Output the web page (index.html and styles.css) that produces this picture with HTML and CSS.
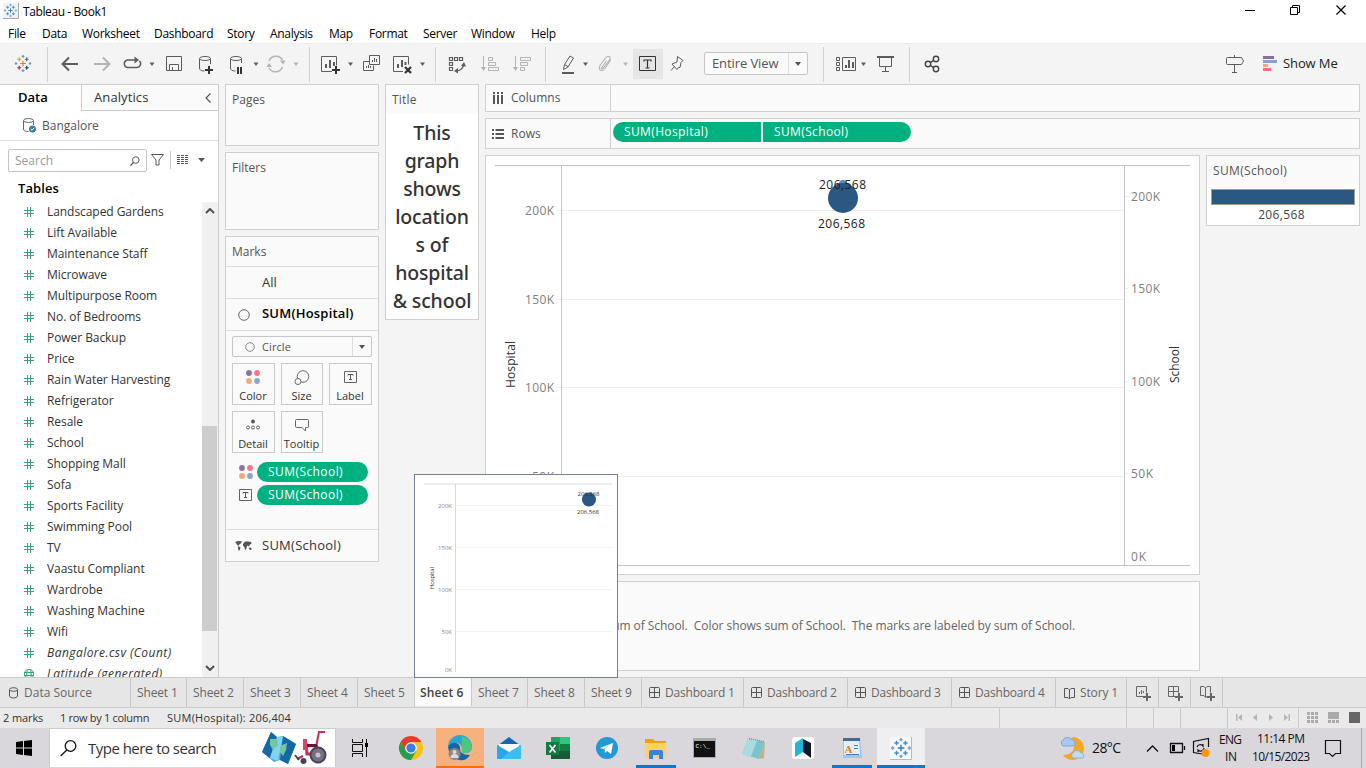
FILE: index.html
```html
<!DOCTYPE html>
<html lang="en">
<head>
<meta charset="utf-8">
<title>Tableau - Book1</title>
<link rel="stylesheet" href="styles.css">
</head>
<body>
<svg class="defs" width="0" height="0">
  <symbol id="hash" viewBox="0 0 10 10"><path d="M3.500 0v10M6.500 0v10M0 3.500h10M0 6.500h10" stroke="#3aa37c" fill="none"/></symbol>
  <symbol id="tlogo" viewBox="0 0 18 18"><g fill="none" stroke-width="1.3"><path class="c1" d="M9 6v6M6 9h6"/><path class="c2" d="M5 2.500v4M3 4.500h4"/><path class="c3" d="M13 2.500v4M11 4.500h4"/><path class="c4" d="M5 11.500v4M3 13.500h4"/><path class="c5" d="M13 11.500v4M11 13.500h4"/><path class="c6" d="M9 0v3M7.500 1.500h3M1.500 7.500v3M0 9h3"/><path class="c7" d="M16.500 7.500v3M15 9h3M9 15v3M7.500 16.500h3"/></g></symbol>
  <symbol id="grid" viewBox="0 0 11 11"><path d="M1.500.5h8q1 0 1 1v8q0 1-1 1h-8q-1 0-1-1v-8q0-1 1-1zM5.500.5v10M.5 5.500h10" fill="none" stroke="#555"/></symbol>
  <symbol id="dots" viewBox="0 0 14 14"><circle cx="3" cy="3" r="2.900" fill="#8a759c"/><circle cx="11" cy="3" r="2.900" fill="#fb7185"/><circle cx="3" cy="11" r="2.900" fill="#f4a77f"/><circle cx="11" cy="11" r="2.900" fill="#86a7cb"/></symbol>
  <symbol id="tbox" viewBox="0 0 13 12"><path d="M.5.500h12v11H.5z" fill="none" stroke="#666"/><path d="M4 4.500V3.500h5v1M6.500 3.500v5M5 8.500h3" fill="none" stroke="#555"/></symbol>
</svg>

<header class="titlebar">
  <svg class="app" width="16" height="16"><path d="M0 0h15v15H0z" fill="#f0f1f3"/><path d="M15.500 0v15.500H0" stroke="#aaa" fill="none"/><use href="#tlogo" x="1" y="1" width="13" height="13"/></svg>
  <span class="name">Tableau - Book1</span>
  <svg class="winctl" width="110" height="22" viewBox="1240 0 110 22"><path d="M1245 10.500h10M1290.500 7.500h7v7h-7zM1292.500 7.500v-2h7v7h-2" fill="none" stroke="#000"/><path d="M1336.500 5.500l9 9m0-9l-9 9" stroke="#000" stroke-width="1.200"/></svg>
</header>
<nav class="menu"><span class="m1">File</span><span class="m2">Data</span><span class="m3">Worksheet</span><span class="m4">Dashboard</span><span class="m5">Story</span><span class="m6">Analysis</span><span class="m7">Map</span><span class="m8">Format</span><span class="m9">Server</span><span class="m10">Window</span><span>Help</span></nav>

<div class="toolbar">
  <svg class="tool color" width="47" height="40" viewBox="0 44 47 40"><use href="#tlogo" x="14.500" y="55" width="17" height="17"/></svg>
  <svg class="tool sep" width="262" height="40" viewBox="47 44 262 40">
    <path d="M63 64h15M69 57.500L62.500 64l6.500 6.500" stroke-width="2"/>
    <path class="dim" d="M94 64h15M103 57.500l6.500 6.500-6.500 6.500" stroke-width="2"/>
    <path d="M131 67.500h-3.500a3.800 3.800 0 010-7.500h8M131 67.500h5.500a3.800 3.800 0 003-6.500" stroke-width="1.500"/><path d="M134.500 56.500l4.500 3.500-4.500 3.500z" class="fill"/>
    <path class="caret" d="M149.500 62.500h5l-2.500 3.500z"/>
    <path d="M166.500 56.500h15v14h-15zM169.500 70.500v-6h9v6M172.500 70v-3"/>
    <path d="M199.500 59v9q0 3 5 3M210.500 59v5"/><ellipse cx="205" cy="58.500" rx="5.500" ry="2"/><path d="M209 66v8M205 70h8" stroke="#333" stroke-width="2"/>
    <path d="M230.500 59v9q0 3 5 3M241.500 59v4"/><ellipse cx="236" cy="58.500" rx="5.500" ry="2"/><path d="M238 67v7M241 67v7" stroke="#333" stroke-width="2"/>
    <path class="caret" d="M253.500 62.500h5l-2.500 3.500z"/>
    <path class="dim" d="M269 61a7.500 7.500 0 0113.500-1M282.500 67a7.500 7.500 0 01-13.500 1" stroke-width="1.500"/><path class="dimfill" d="M280 60.500h5.500l-2.500 4zM266.500 67h5.500l-3-4z"/>
    <path class="dimfill" d="M293.500 62.500h5l-2.500 3.500z"/>
  </svg>
  <svg class="tool sep" width="126" height="40" viewBox="309 44 126 40">
    <path d="M332 71.500h-10.500v-15h15v9"/><path d="M326 64v4M330 60v8M334 62v4" stroke-width="2"/><path d="M336 66v8M332 70h8" stroke="#333" stroke-width="2"/>
    <path class="caret" d="M348 62.500h5l-2.500 3.500z"/>
    <path d="M369.500 55.500h10v9h-10zM369 61.500h-5.500v9h10v-5M372.500 62v-2M374.500 62v-4M376.500 62v-3M366.500 68v-2M368.500 68v-3M370.500 68v-2"/>
    <path d="M403 71.500h-9.500v-15h15v8"/><path d="M398 64v4M402 60v7M405.500 62v3" stroke-width="2"/><path d="M405 67l6 6m0-6l-6 6" stroke="#333" stroke-width="2.200"/>
    <path class="caret" d="M420 62.500h5l-2.500 3.500z"/>
  </svg>
  <svg class="tool sep" width="110" height="40" viewBox="435 44 110 40">
    <path d="M449.500 57.500h3v3h-3zM454.500 57.500h3v3h-3zM459.500 57.500h3v3h-3zM449.500 62.500h3v3h-3zM449.500 67.500h3v3h-3zM463.500 64q0 6-7 7" stroke-width="1.200"/><path class="fill" d="M461 66l3-4 2 4.500zM458 68v5.500l-4-2.500z"/>
    <path class="dim" d="M483.500 56v14M488.500 57.500h4v3h-4zM488.500 62.500h7v3h-7zM488.500 67.500h10v3h-10z"/><path class="dimfill" d="M481 67h5l-2.500 4z"/>
    <path class="dim" d="M515.500 56v14M520.500 57.500h10v3h-10zM520.500 62.500h7v3h-7zM520.500 67.500h4v3h-4z"/><path class="dimfill" d="M513 67h5l-2.500 4z"/>
  </svg>
  <svg class="tool sep" width="159" height="40" viewBox="545 44 159 40">
    <path d="M563.500 69.500l1-5 5.500-8.500 3.500 2-5.500 9zM564.500 64.500l3.500 2"/><path d="M562 73h12" stroke-width="2"/>
    <path class="caret" d="M583 62.500h5l-2.500 3.500z"/>
    <path class="dim" d="M606.500 60.500l-4.500 7q-2 2 1 1l6.500-8.500q2-4-2-3.500-1 0-2 1.500l-5.500 7.500q-2 4 1 5 2 .5 4-2l6-9" stroke-width="1.100"/>
    <path class="dimfill" d="M623 62.500h5l-2.500 3.500z"/>
    <path d="M633 49h30v30h-30z" fill="#e5e5e5" stroke="none"/><path d="M639.500 56.500h16v14h-16z" stroke="#333"/><path d="M644 61.500v-1.500h7v1.500M647.500 60v8M645.500 68h4" stroke="#333" stroke-width="1.200"/>
    <path d="M677.500 56.500l5.500 4-2 2-1 5h-1.500l-1.500 2-5-5.500 5-2zM674.500 66.500l-3.500 4"/>
  </svg>
  <div class="select fit"><span>Entire View</span><i></i></div>
  <svg class="tool sep" width="86" height="40" viewBox="823 44 86 40">
    <path d="M836.500 57.500h3v3h-3zM836.500 62.500h3v3h-3zM836.500 67.500h3v3h-3zM842.500 57.500h13v13h-13z"/><path d="M846 65v3M849 60v8M853 62v6" stroke-width="2"/>
    <path class="caret" d="M861 62.500h5l-2.500 3.500z"/>
    <path d="M877 57h17" stroke-width="2"/><path d="M879.500 57v9.500h12V57M885.500 66.500V71M882 71.500h7M885.500 56v1"/>
  </svg>
  <svg class="tool sep" width="317" height="40" viewBox="909 44 317 40"><g stroke-width="1.400" stroke="#444"><circle cx="928" cy="64" r="2.700"/><circle cx="936" cy="59" r="2.700"/><circle cx="936" cy="69" r="2.700"/><path d="M930.300 62.600l3.400-2.200M930.300 65.400l3.400 2.200"/></g></svg>
  <svg class="tool" width="54" height="40" viewBox="1226 44 54 40"><path d="M1227.500 57.500h14l2 3.500-2 3.500h-14q-1 0-1-1v-5q0-1 1-1zM1234.500 55v2M1234.500 65v7M1232 72.500h5"/><g stroke="none"><path d="M1263 56h11v3h-11z" fill="#876f98"/><path d="M1263 60h14v3h-14z" fill="#84a4cb"/><path d="M1263 64h5v3h-5z" fill="#f4a67d"/><path d="M1263 68h8v3h-8z" fill="#f66e80"/></g></svg>
  <span class="showme">Show Me</span>
</div>

<main class="work">
  <aside class="datapane">
    <div class="ptabs"><b>Data</b><div class="an"><span>Analytics</span><svg width="8" height="10"><path d="M6.500.5L2 5l4.500 4.500" fill="none" stroke="#555" stroke-width="1.200"/></svg></div></div>
    <div class="source"><svg width="14" height="15"><path d="M.5 3v8q0 2.500 5 2.500M10.500 3v4" fill="none" stroke="#666"/><ellipse cx="5.500" cy="2.500" rx="5" ry="2" fill="none" stroke="#666"/><circle cx="9.500" cy="11" r="3.500" fill="#3a80a5"/><path d="M7.800 11l1.200 1.200 2.200-2.400" fill="none" stroke="#fff"/></svg><span>Bangalore</span></div>
    <div class="find"><div class="box"><span>Search</span><svg width="10" height="10"><circle cx="5.800" cy="4" r="3.300" fill="none" stroke="#555"/><path d="M3.500 6.500L.5 9.500" stroke="#555" stroke-width="1.200"/></svg></div>
      <svg width="56" height="18" viewBox="151 151 56 18" fill="none" stroke="#555"><path d="M151.500 154.500h12l-4.500 5.500v5h-3v-5z"/><path d="M170.500 151v18" stroke="#ccc"/><path d="M177 155.500h12M177 157.500h12M177 159.500h12M177 161.500h12M177 163.500h12" stroke-dasharray="3 1"/><path d="M198 158h7l-3.500 4z" fill="#555" stroke="none"/></svg></div>
    <h3>Tables</h3>
    <div class="listwrap">
      <ul class="fields">
        <li><svg><use href="#hash"/></svg>Landscaped Gardens</li><li><svg><use href="#hash"/></svg>Lift Available</li><li><svg><use href="#hash"/></svg>Maintenance Staff</li><li><svg><use href="#hash"/></svg>Microwave</li><li><svg><use href="#hash"/></svg>Multipurpose Room</li><li><svg><use href="#hash"/></svg>No. of Bedrooms</li><li><svg><use href="#hash"/></svg>Power Backup</li><li><svg><use href="#hash"/></svg>Price</li><li><svg><use href="#hash"/></svg>Rain Water Harvesting</li><li><svg><use href="#hash"/></svg>Refrigerator</li><li><svg><use href="#hash"/></svg>Resale</li><li><svg><use href="#hash"/></svg>School</li><li><svg><use href="#hash"/></svg>Shopping Mall</li><li><svg><use href="#hash"/></svg>Sofa</li><li><svg><use href="#hash"/></svg>Sports Facility</li><li><svg><use href="#hash"/></svg>Swimming Pool</li><li><svg><use href="#hash"/></svg>TV</li><li><svg><use href="#hash"/></svg>Vaastu Compliant</li><li><svg><use href="#hash"/></svg>Wardrobe</li><li><svg><use href="#hash"/></svg>Washing Machine</li><li><svg><use href="#hash"/></svg>Wifi</li><li class="it"><svg><use href="#hash"/></svg>Bangalore.csv (Count)</li>
        <li class="it"><svg viewBox="0 0 10 10" fill="none" stroke="#3aa37c"><circle cx="5" cy="5" r="4.700"/><ellipse cx="5" cy="5" rx="2.200" ry="4.700"/><path d="M0 3.500h10M0 6.500h10"/></svg>Latitude (generated)</li>
      </ul>
      <div class="scroll"><svg width="10" height="6"><path d="M1 5l4-4 4 4"/></svg><div class="thumb"></div><svg width="10" height="6"><path d="M1 1l4 4 4-4"/></svg></div>
    </div>
  </aside>

  <section class="cards">
    <div class="card pages">Pages</div>
    <div class="card filters">Filters</div>
    <div class="card marks">
      <div class="mh">Marks</div>
      <div class="mr all">All</div>
      <div class="mr hosp"><svg width="12" height="12"><circle cx="6" cy="6" r="5.300" fill="none" stroke="#666"/></svg><b>SUM(Hospital)</b></div>
      <div class="mbody">
        <div class="select shape"><svg width="10" height="10"><circle cx="5" cy="5" r="4.300" fill="none" stroke="#888"/></svg><span>Circle</span><i></i></div>
        <div class="btns">
          <div><svg width="14" height="14"><use href="#dots"/></svg>Color</div>
          <div><svg width="16" height="16" fill="none" stroke="#666"><circle cx="9" cy="6.500" r="5.800"/><circle cx="4" cy="11.500" r="3" fill="#fafafa"/></svg>Size</div>
          <div><svg width="13" height="14" viewBox="0 -1 13 14"><use href="#tbox" width="13" height="12"/></svg>Label</div>
          <div><svg width="14" height="14"><circle cx="7" cy="3.500" r="1.900" fill="#555"/><g fill="none" stroke="#666"><circle cx="2" cy="9.500" r="1.500"/><circle cx="7" cy="9.500" r="1.500"/><circle cx="12" cy="9.500" r="1.500"/></g></svg>Detail</div>
          <div><svg width="14" height="14"><path d="M1.500 1.500h11q1 0 1 1v6q0 1-1 1h-2v3.500l-3.500-3.500h-5.500q-1 0-1-1v-6q0-1 1-1z" fill="none" stroke="#666"/></svg>Tooltip</div>
        </div>
        <div class="enc"><svg width="14" height="14"><use href="#dots"/></svg><span class="pill">SUM(School)</span></div>
        <div class="enc"><svg width="13" height="12"><use href="#tbox"/></svg><span class="pill">SUM(School)</span></div>
      </div>
      <div class="mr sch"><svg width="17" height="12" fill="#555"><path d="M0 2l3-1 4 .3-1 2-2 1.400-1 1.300 2.500 1.500-.5 2-1.300 1.500-.7-3L3 6 1 3zM8 4l1.500-2 2-.7L16 2l.5 1.500-2 1.500-.5 2-1-1.500-1 .5-.6 2.500L10 10.500 9.500 7 8 6zM13.500 8l2.500-.5.7 2-1.500.8z"/></svg><span>SUM(School)</span></div>
    </div>
  </section>

  <section class="card titlecard"><div class="th">Title</div><div class="big">This<br>graph<br>shows<br>location<br>s of<br>hospital<br>&amp; school</div></section>

  <section class="viz">
    <div class="card shelf cols"><div class="sl"><svg width="12" height="12"><path d="M2 3v9M6 3v9M10 3v9M2 0v2M6 0v2M10 0v2" stroke="#555" stroke-width="2"/></svg>Columns</div></div>
    <div class="card shelf rows"><div class="sl"><svg width="12" height="10"><path d="M0 1h2M0 5h2M0 9h2M3.500 1H12M3.500 5H12M3.500 9H12" stroke="#555" stroke-width="2"/></svg>Rows</div><span class="pill left">SUM(Hospital)</span><span class="pill right">SUM(School)</span></div>
    <div class="lower">
      <div class="viewcol">
        <div class="card view">
          <svg class="chart" width="713" height="418" viewBox="486 156 713 418">
            <path d="M556 210.500h568M556 299.500h568M556 387.500h568M556 476.500h568M1124 196.500h4M1124 288.500h4M1124 381.500h4M1124 473.500h4" stroke="#efefef"/>
            <path d="M495 165.500h695M495 565.500h695M561.500 165v400M1124.500 165v400" stroke="#c4c4c4"/>
            <g class="ax"><text x="525" y="215" textLength="29">200K</text><text x="525" y="304" textLength="29">150K</text><text x="525" y="392" textLength="29">100K</text><text x="532" y="481" textLength="22">50K</text><text x="1131" y="201" textLength="29">200K</text><text x="1131" y="293" textLength="29">150K</text><text x="1131" y="386" textLength="29">100K</text><text x="1131" y="478" textLength="22">50K</text><text x="1131" y="561" textLength="15">0K</text></g>
            <g class="axt"><text transform="translate(515 388) rotate(-90)" textLength="47">Hospital</text><text transform="translate(1179 383) rotate(-90)" textLength="37">School</text></g>
            <circle cx="843" cy="184" r="4" fill="#6c87a3"/><circle cx="843" cy="198" r="15" fill="#2b5783"/>
            <g class="mk"><text x="819" y="189" textLength="47">206,568</text><text x="818" y="228" textLength="47">206,568</text></g>
          </svg>
        </div>
        <div class="card caption"><span>Sum of Hospital and sum of School.&nbsp; Color shows sum of School.&nbsp; The marks are labeled by sum of School.</span></div>
      </div>
      <div class="card legend"><div class="lh">SUM(School)</div><div class="bar"></div><div class="lv">206,568</div></div>
    </div>
  </section>

  <div class="preview">
    <svg width="202" height="202" viewBox="415 475 202 202">
      <path d="M456 505.500h156M456 547.500h156M456 589.500h156M456 631.500h156" stroke="#f3f3f3"/><path d="M424 484h188" stroke="#eee" stroke-width="2"/><path d="M455.500 484v188" stroke="#dadada"/>
      <g class="pax"><text x="438" y="507.500" textLength="14">200K</text><text x="438" y="549.500" textLength="14">150K</text><text x="438" y="591.500" textLength="14">100K</text><text x="441.500" y="633.500" textLength="10.500">50K</text><text x="445" y="671.500" textLength="7">0K</text></g>
      <text class="pt" transform="translate(433.500 589) rotate(-90)" textLength="22">Hospital</text>
      <circle cx="589" cy="499.500" r="7" fill="#2b5783"/><g class="pm"><text x="577.500" y="495.500" textLength="22">206,568</text><text x="577" y="514" textLength="22">206,568</text></g>
    </svg>
  </div>
</main>

<nav class="sheets">
  <span class="t131"><svg width="9" height="12" fill="none" stroke="#555"><ellipse cx="4.500" cy="2.500" rx="4" ry="1.800"/><path d="M.5 2.500v6.500q0 2 4 2t4-2V2.500"/></svg>Data Source</span><span class="t56">Sheet 1</span><span class="t57">Sheet 2</span><span class="t57">Sheet 3</span><span class="t57">Sheet 4</span><span class="t57">Sheet 5</span><span class="t57 on">Sheet 6</span><span class="t56">Sheet 7</span><span class="t57">Sheet 8</span><span class="t57">Sheet 9</span><span class="d102"><svg width="11" height="11"><use href="#grid"/></svg>Dashboard 1</span><span class="d104"><svg width="11" height="11"><use href="#grid"/></svg>Dashboard 2</span><span class="d104"><svg width="11" height="11"><use href="#grid"/></svg>Dashboard 3</span><span class="d104"><svg width="11" height="11"><use href="#grid"/></svg>Dashboard 4</span><span class="s71"><svg width="11" height="12" fill="none" stroke="#555"><path d="M.5 1.500l3.500 0 1.500 1.500 1.500-1.500h3.500v9H7L5.500 12 4 10.500H.5zM5.500 3v9"/></svg>Story 1</span>
  <span class="new"><svg width="16" height="16" fill="none" stroke="#666"><path d="M8 11.500H1.500v-10h10v6M4.500 9V7M6.500 9V5M8.500 8V6"/><path d="M12 8v8M8 12h8" stroke-width="2"/></svg></span>
  <span class="new"><svg width="16" height="16" fill="none" stroke="#666"><path d="M8 11.500H1.500v-10h10v6M6.500 1.500v10M1.500 6.500h10"/><path d="M12 8v8M8 12h8" stroke-width="2"/></svg></span>
  <span class="new"><svg width="16" height="16" fill="none" stroke="#666"><path d="M8 11.500l-1.500 1-1.500-2H1.500v-9H5l1.500 1.500L8 1.500h3.500v6M6.500 3v9"/><path d="M12 8v8M8 12h8" stroke-width="2"/></svg></span>
</nav>

<footer class="status"><span class="st1">2 marks</span><span class="st2">1 row by 1 column</span><span class="st3">SUM(Hospital): 206,404</span>
  <svg width="367" height="20" viewBox="999 708 367 20"><path d="M999.500 708v20M1126.500 708v20M1153.500 708v20M1180.500 708v20M1227.500 708v20M1298.500 708v20" stroke="#ccc"/><path fill="#b5b5b5" d="M1236 714h1.500v7h-1.500zM1242 714v7l-4-3.500zM1257 714v7l-4-3.500zM1269 714v7l4-3.500zM1284 714v7l4-3.500zM1288.500 714h1.500v7h-1.500z"/><path fill="#aaa" d="M1307 712h3v3h-3zM1311 712h3v3h-3zM1315 712h3v3h-3zM1307 716h3v3h-3zM1311 716h3v3h-3zM1315 716h3v3h-3zM1307 720h3v3h-3zM1311 720h3v3h-3zM1315 720h3v3h-3zM1328 712h11v7h-11zM1328 720h3v3h-3zM1332 720h3v3h-3zM1336 720h3v3h-3z"/><path fill="#666" d="M1349 712h11v11h-11z"/></svg>
</footer>

<div class="taskbar">
  <svg class="start" width="49" height="40" viewBox="0 728 49 40"><path d="M16 742l7-1v6.500h-7zM24 740.900l8-1v7.600h-8zM16 748.500h7v6.500l-7-1zM24 748.500h8v7.500l-8-1z"/></svg>
  <div class="wsearch"><svg width="17" height="17" fill="none" stroke="#111" stroke-width="1.300"><circle cx="10.500" cy="6" r="5.300"/><path d="M6.800 10L.7 16"/></svg><span>Type here to search</span>
    <svg class="art" width="68" height="36" viewBox="260 731 68 36"><path d="M271 733l6 5 6-1 13 8-8 20-8-4-6 2-12-10z" fill="#4ba9dc"/><path d="M271 733l6 5-7 21-8-6zM283 737l13 8-8 20-8-4z" fill="#1668a5"/><path d="M277 738l6-1-5 25-8-3z" fill="#83d3ef"/><path d="M270 740l7 0 1 6-5 5-3-5zM280 747l7-3-1 7-3 6-3-4z" fill="#72c6a5"/><g fill="none" stroke="#c53052"><path d="M325 733h-6l-3 15" stroke-width="2"/><path d="M306 744l1 11h11" stroke-width="3"/><path d="M307 747h11M303 757l-6 3" stroke-width="2.500"/></g><path d="M303 740h4v11h-4z" fill="#e0446a"/><path d="M307 745h10v3h-10z" fill="#5d173d"/><circle cx="318" cy="756" r="7.500" fill="#777184" stroke="#4b4352" stroke-width="2"/><circle cx="318" cy="756" r="2.500" fill="#c9c1cc"/><circle cx="303.500" cy="762" r="3" fill="#4b4352"/><path d="M295 756l4 5" stroke="#4b4352" stroke-width="2"/></svg>
  </div>
  <svg class="apps" width="1030" height="40" viewBox="336 728 1030 40">
    <path d="M352.500 739v3.500h10V739M352.500 757v-3.500h10v3.500M352.500 744.500h10v7h-10zM366.500 739v18" fill="none" stroke="#111"/><path d="M365 743h3v4h-3z"/>
    <circle cx="411" cy="748" r="12" fill="#fbc116"/><path d="M400.600 742a12 12 0 0120.800 0H411l-5.200 9z" fill="#e33b2e"/><path d="M400.600 742a12 12 0 0010.400 18l5.200-9H405.800z" fill="#269e4b"/><circle cx="411" cy="748" r="5.800" fill="#fff"/><circle cx="411" cy="748" r="4.600" fill="#3b7de8"/>
    <path d="M436 728h48v40h-48z" fill="#f8b17d"/><path d="M436 766h48v2h-48z" fill="#ff6c0a"/>
    <path d="M448 747a12 12 0 0124 0q0 6-7 6-4 0-3-4 0-6-6-6-5 0-8 4z" fill="#2aa5dc"/><path d="M462 736.200a12 12 0 0110 11.800q-1 5-7 5-4 0-3-4z" fill="#48c97f"/><path d="M448 747q3-5 8-4 4 1 4 5-1 7 10 7-5 8-14 4-7-4-8-12z" fill="#1566a9"/><circle cx="454.500" cy="754" r="6" fill="#888"/><circle cx="454.500" cy="752" r="2" fill="#ddd"/><path d="M450.500 758q0-4 4-4t4 4z" fill="#ddd"/>
    <path d="M497 746l12-9 12 9v13h-24z" fill="#1767b5"/><path d="M498.500 744h21v9h-21z" fill="#fff"/><path d="M497 745l24 14h-24z" fill="#27a8e8"/><path d="M521 745v14H501l8-7z" fill="#36c0f3"/>
    <path d="M551 737h19v22h-19z" fill="#21a366"/><path d="M560 737h10v7h-10z" fill="#33c481"/><path d="M551 751h19v8h-19z" fill="#185c37"/><path d="M560 744h10v7h-10z" fill="#107c41"/><path d="M546 742h13v13h-13z" fill="#137a43"/><path d="M549.500 745l6 7.500M555.500 745l-6 7.500" stroke="#fff" stroke-width="1.600"/>
    <circle cx="607" cy="748" r="11" fill="#2399d4"/><path d="M600 748l13-5-2 11-4-3-2 2-.5-4 5-4-6 4z" fill="#fff"/>
    <path d="M645 739h8l2 2h11v4h-21z" fill="#e9a115"/><path d="M645 743h21v15h-21z" fill="#fdd365"/><path d="M649 759v-7q0-2 2-2h10q2 0 2 2v7h-4v-4h-6v4z" fill="#3286d8"/><path d="M636 765h40v3h-40z" fill="#0078d7"/>
    <path d="M693 738h23v20h-23z" fill="#aaa"/><path d="M694 741h21v16h-21z" fill="#111"/><text class="cmd" x="695.500" y="748">C:\_</text>
    <path d="M748 739l17 3-6 17-17-5z" fill="#7bc3cd"/><path d="M765 742l-1 16-5 1z" fill="#c5b17f"/><path d="M748 739l9 1.500-6 16-9-2.500z" fill="#a7dce0"/><path d="M749 738.500l15 3" stroke="#777" stroke-dasharray="1 1"/>
    <rect x="792" y="737" width="22" height="22" rx="3" fill="#fff"/><path d="M795 743l8-5v14l-8 5z" fill="#1fb7d8"/><path d="M803 739l8 4v15l-8-6z" fill="#16162a"/>
    <path d="M843 738h17l2 20h-19z" fill="#9cc7e9"/><path d="M844 741h15l1 14h-16z" fill="#e3effa"/><path d="M843 738h17v3h-17z" fill="#456a93"/><text class="wpa" x="844.500" y="752.500">A</text><path d="M854 745.500h4M854 748.500h4M846 754.500h13" stroke="#4c7bb0"/><path d="M832 765h40v3h-40z" fill="#0078d7"/>
    <path d="M877 728h48v40h-48z" fill="#efeef1"/><path d="M877 765h48v3h-48z" fill="#0078d7"/><path d="M890 737h21v22h-21z" fill="#f7f7f7"/><path d="M911.500 737v22.500H890" stroke="#bbb" fill="none"/><use href="#tlogo" x="891" y="738" width="20" height="20"/>
    <g><path d="M1073 737a11.500 11.500 0 11-10 18q10 0 11-8 0-6-3-9z" fill="#f5a623"/><path d="M1063 746a3.500 3.500 0 010-6 5 5 0 018-1q4 1 4 4 0 3-2 3z" fill="#a9c8f1" stroke="#7fa5db"/><path d="M1073 758a3 3 0 010-5 4 4 0 017-1q4 1 4 4 0 2-2 2z" fill="#c3daf7" stroke="#8fb0e2"/></g>
    <text class="w15" x="1092" y="753" textLength="29">28°C</text>
    <path d="M1147 751.500l5.500-5.500 5.500 5.500M1170.500 743.500h12v9h-12zM1184.500 746v4" fill="none" stroke="#111" stroke-width="1.300"/><path d="M1172 745h3v6h-3z"/>
    <path d="M1208.500 747v-8.500l-15 3v11l9 1.500" fill="none" stroke="#111" stroke-width="1.200"/><path d="M1197 747a3.500 3.500 0 016-1v-2M1204 748a3.500 3.500 0 01-6 2v2" fill="none" stroke="#111" stroke-width="1.200"/><circle cx="1205.500" cy="753" r="4" fill="#ff9500"/>
    <g class="w12"><text x="1219" y="744" textLength="23">ENG</text><text x="1225" y="761" textLength="12">IN</text><text x="1257" y="743" textLength="48">11:14 PM</text><text x="1252" y="761" textLength="58">10/15/2023</text></g>
    <path d="M1325.500 740.500h15v13h-5l-3 3-3-3h-4z" fill="none" stroke="#111" stroke-width="1.200"/><path d="M1361.500 728v40" stroke="#aaa"/>
  </svg>
</div>
</body>
</html>
```
FILE: styles.css
```css
* { box-sizing: border-box; }
body { margin: 0; width: 1366px; height: 768px; overflow: hidden; display: flex; flex-direction: column; background: #fff; font: 12px/16px "Open Sans", "Noto Sans", sans-serif; color: #333; }
.defs { position: absolute; }
svg { display: block; flex: none; }
span, b { white-space: nowrap; }

.titlebar { height: 22px; display: flex; align-items: center; flex: none; color: #000; }
.app { margin: 0 4px 0 3px; }
.name { flex: 1; letter-spacing: -.4px; padding-top: 2px; }
.winctl { margin-right: 16px; }
.menu { height: 21px; flex: none; display: flex; align-items: center; padding: 2px 0 0 8px; color: #000; letter-spacing: -.3px; }
.m1 { width: 34px; } .m2 { width: 40px; } .m3 { width: 72px; } .m4 { width: 73px; } .m5 { width: 43px; } .m6 { width: 59px; } .m7 { width: 40px; } .m8 { width: 54px; } .m9 { width: 48px; } .m10 { width: 60px; }

.toolbar { height: 41px; flex: none; background: #f4f4f4; border-top: 1px solid #ededed; display: flex; }
.tool { fill: none; stroke: #5c5c5c; }
.sep { background: linear-gradient(#d0d0d0, #d0d0d0) 0 3px / 1px 35px no-repeat; }
.tool .dim { stroke: #b3b3b3; }
.tool .fill, .tool .caret { fill: #5c5c5c; stroke: none; }
.tool .dimfill { fill: #b3b3b3; stroke: none; }
.select { border: 1px solid #c6c6c6; border-radius: 2px; background: #fafafa; display: flex; align-items: stretch; color: #555; }
.select i { width: 19px; border-left: 1px solid #ddd; display: flex; align-items: center; justify-content: center; }
.select i::after { content: ""; border: 3.500px solid transparent; border-top: 4px solid #555; border-bottom: 0; }
.fit { width: 104px; height: 23px; margin: 8px 15px 0 0; font-size: 13px; line-height: 21px; }
.fit span { flex: 1; padding-left: 7px; letter-spacing: -.1px; }
.showme { padding: 10px 0 0 3px; font-size: 13px; line-height: 18px; color: #222; letter-spacing: -.1px; }

.work { height: 593px; flex: none; background: #f4f4f4; display: flex; position: relative; }
.datapane { width: 219px; height: 593px; background: #fff; border-right: 1px solid #ccc; border-top: 1px solid #ccc; display: flex; flex-direction: column; }
.ptabs { height: 26px; display: flex; font-size: 13px; line-height: 25px; color: #000; flex: none; }
.ptabs b { width: 81px; padding-left: 18px; font-weight: 600; }
.an { flex: 1; border: solid #ccc; border-width: 0 0 1px 1px; background: #fafafa; color: #333; display: flex; justify-content: space-between; align-items: center; padding: 0 6px 0 12px; letter-spacing: .1px; }
.source { height: 30px; border-bottom: 1px solid #ddd; flex: none; display: flex; align-items: center; padding-left: 23px; gap: 5px; color: #555; }
.find { height: 37px; padding: 8px 0 0 8px; display: flex; gap: 4px; flex: none; align-items: flex-start; }
.box { width: 139px; height: 23px; border: 1px solid #c4c4c4; border-radius: 2px; display: flex; align-items: center; justify-content: space-between; padding: 0 6px; color: #999; }
.find > svg { margin-top: 2px; }
h3 { margin: 0; padding: 1px 0 0 18px; height: 24px; font-size: 13px; line-height: 18px; font-weight: 600; letter-spacing: .1px; color: #000; flex: none; }
.listwrap { height: 475px; overflow: hidden; display: flex; justify-content: space-between; flex: none; }
.fields { margin: -1px 0 0; padding: 0; list-style: none; }
.fields li { height: 21px; display: flex; align-items: center; padding-left: 24px; white-space: nowrap; color: #333; letter-spacing: -.06px; }
.fields svg { width: 10px; height: 10px; margin-right: 13px; }
.fields .it { font-style: italic; letter-spacing: .45px; }
.scroll { width: 16px; background: #f0f0f0; display: flex; flex-direction: column; align-items: center; justify-content: space-between; padding: 6px 1px 6px 0; }
.scroll path { fill: none; stroke: #505050; stroke-width: 2; }
.scroll svg:first-child { margin-bottom: 212px; }
.thumb { width: 15px; height: 206px; background: #cdcdcd; align-self: flex-start; margin-bottom: 34px; }

.card { border: 1px solid #d0d0d0; background: #fafafa; color: #555; }
.cards { width: 154px; margin-left: 6px; display: flex; flex-direction: column; gap: 6px; }
.pages { height: 62px; padding: 7px 6px; }
.filters { height: 78px; padding: 7px 6px; }
.marks { height: 326px; display: flex; flex-direction: column; }
.mh { height: 30px; padding: 7px 6px; border-bottom: 1px solid #ddd; }
.mr { height: 32px; display: flex; align-items: center; border-bottom: 1px solid #ddd; color: #333; font-size: 13px; }
.all { padding: 0 0 2px 36px; }
.hosp { padding-left: 12px; gap: 12px; color: #000; }
.hosp b { font-weight: 600; letter-spacing: .2px; padding-bottom: 3px; }
.mbody { height: 198px; padding: 5px 6px 0; }
.shape { height: 21px; line-height: 20px; font-size: 11px; align-items: center; letter-spacing: .1px; }
.shape svg { margin: 0 7px 0 12px; }
.shape span { flex: 1; }
.shape i { align-self: stretch; }
.btns { display: grid; grid-template-columns: 43px 42px 43px; column-gap: 6px; row-gap: 6px; padding-top: 6px; margin-bottom: 9px; }
.btns div { height: 42px; border: 1px solid #c9c9c9; display: flex; flex-direction: column; align-items: center; justify-content: space-between; padding: 6px 1px 1px 0; font-size: 11px; line-height: 15px; color: #333; }
.enc { display: flex; align-items: center; padding-left: 7px; height: 20px; margin-bottom: 3px; justify-content: space-between; padding-right: 4px; }
.pill { display: block; width: 111px; height: 20px; line-height: 20px; border-radius: 10px; background: #00b180; color: #fff; padding-left: 11px; letter-spacing: .43px; }
.sch { border-top: 1px solid #ddd; border-bottom: 0; flex: 1; padding-left: 9px; gap: 10px; }
.sch span { letter-spacing: .25px; padding-bottom: 2px; }

.titlecard { width: 94px; height: 236px; margin-left: 6px; background: #fff; }
.th { height: 29px; padding: 7px 6px; background: #fafafa; letter-spacing: .2px; }
.big { font: 500 19.500px/28px "Noto Sans", sans-serif; letter-spacing: -.15px; color: #333; text-align: center; padding-top: 5px; white-space: nowrap; }

.viz { width: 875px; margin-left: 6px; display: flex; flex-direction: column; gap: 6px; }
.shelf { display: flex; }
.cols { height: 28px; }
.rows { height: 31px; align-items: flex-start; }
.sl { width: 125px; border-right: 1px solid #d0d0d0; align-self: stretch; display: flex; align-items: center; gap: 7px; padding-left: 6px; }
.rows .pill { margin-top: 3px; letter-spacing: .37px; }
.rows .left { width: 148px; margin-left: 2px; border-radius: 10px 0 0 10px; }
.rows .right { width: 148px; margin-left: 2px; border-radius: 0 10px 10px 0; }
.lower { display: flex; gap: 6px; align-items: flex-start; }
.viewcol { width: 715px; display: flex; flex-direction: column; gap: 6px; }
.view { height: 420px; background: #fff; }
.caption { height: 90px; display: flex; align-items: center; justify-content: flex-end; padding-right: 124px; letter-spacing: -.06px; color: #666; }
.legend { width: 154px; height: 71px; background: #fff; }
.lh { height: 29px; background: #fafafa; padding: 7px 6px; letter-spacing: .35px; }
.bar { height: 16px; margin: 4px 4px 0; background: #2b5783; border: 1px solid #a19c8a; }
.lv { text-align: center; line-height: 18px; padding-right: 3px; color: #444; letter-spacing: .35px; padding-top: 1px; }
.chart text { font-size: 12px; fill: #808080; }
.chart .axt text { fill: #333; }
.chart .mk text { fill: #222; }
.preview { position: absolute; left: 414px; top: 390px; width: 204px; height: 204px; border: 1px solid #74839a; background: #fff; z-index: 2; }
.preview text { font-size: 6px; fill: #888; }
.preview .pt, .preview .pm text { fill: #333; }

.sheets { height: 31px; flex: none; background: #e6e6e6; border: solid #ccc; border-width: 1px 0; display: flex; color: #666; line-height: 29px; }
.sheets span { border-right: 1px solid #c8c8c8; display: flex; align-items: center; justify-content: center; }
.t131 { width: 131px; gap: 6px; }
.sheets .t131 { justify-content: flex-start; padding-left: 9px; }
.t56 { width: 56px; } .t57 { width: 57px; }
.sheets .t56, .sheets .t57 { justify-content: flex-start; padding-left: 6px; letter-spacing: -.15px; }
.sheets .on { background: #fafafa; color: #444; font-weight: 600; height: 28px; letter-spacing: .1px; padding-left: 5px; }
.sheets span[class^="d"] { justify-content: flex-start; padding-left: 7px; gap: 5px; letter-spacing: -.2px; }
.d102 { width: 102px; } .d104 { width: 104px; }
.s71 { width: 71px; gap: 5px; letter-spacing: -.15px; }
.new { width: 32px; }
.status { height: 20px; flex: none; background: #eaeaea; display: flex; align-items: center; font-size: 11px; color: #333; padding-left: 3px; }
.st1 { width: 57px; letter-spacing: -.1px; } .st2 { width: 107px; letter-spacing: -.3px; } .st3 { flex: 1; letter-spacing: .23px; }

.taskbar { height: 40px; flex: none; background: #d9d7dc; display: flex; }
.wsearch { width: 287px; height: 39px; background: #fff; border: 1px solid #ccc; border-width: 1px 1px 0; display: flex; align-items: center; padding-left: 10px; font-size: 15px; color: #333; }
.wsearch span { margin-left: 11px; letter-spacing: -.52px; flex: 1; }
.art { margin-right: 7px; }
.w15 { font-size: 14px; fill: #111; }
.w12 { font-size: 12px; fill: #111; }
.cmd { font: 6px "Liberation Mono", monospace; fill: #fff; }
.wpa { font: bold 11px "Liberation Serif", serif; fill: #e57b20; }

.color use { --l1: #e8762c; --l2: #eb912b; --l3: #5a6591; --l4: #c72035; --l5: #1f447e; --l6: #6a9aab; --l7: #7199a6; }
#tlogo .c1 { stroke: var(--l1, #2f7fae); }
#tlogo .c2 { stroke: var(--l2, #4a90bb); }
#tlogo .c3 { stroke: var(--l3, #4a90bb); }
#tlogo .c4 { stroke: var(--l4, #4a90bb); }
#tlogo .c5 { stroke: var(--l5, #4a90bb); }
#tlogo .c6 { stroke: var(--l6, #6aa6ca); }
#tlogo .c7 { stroke: var(--l7, #6aa6ca); }
```
